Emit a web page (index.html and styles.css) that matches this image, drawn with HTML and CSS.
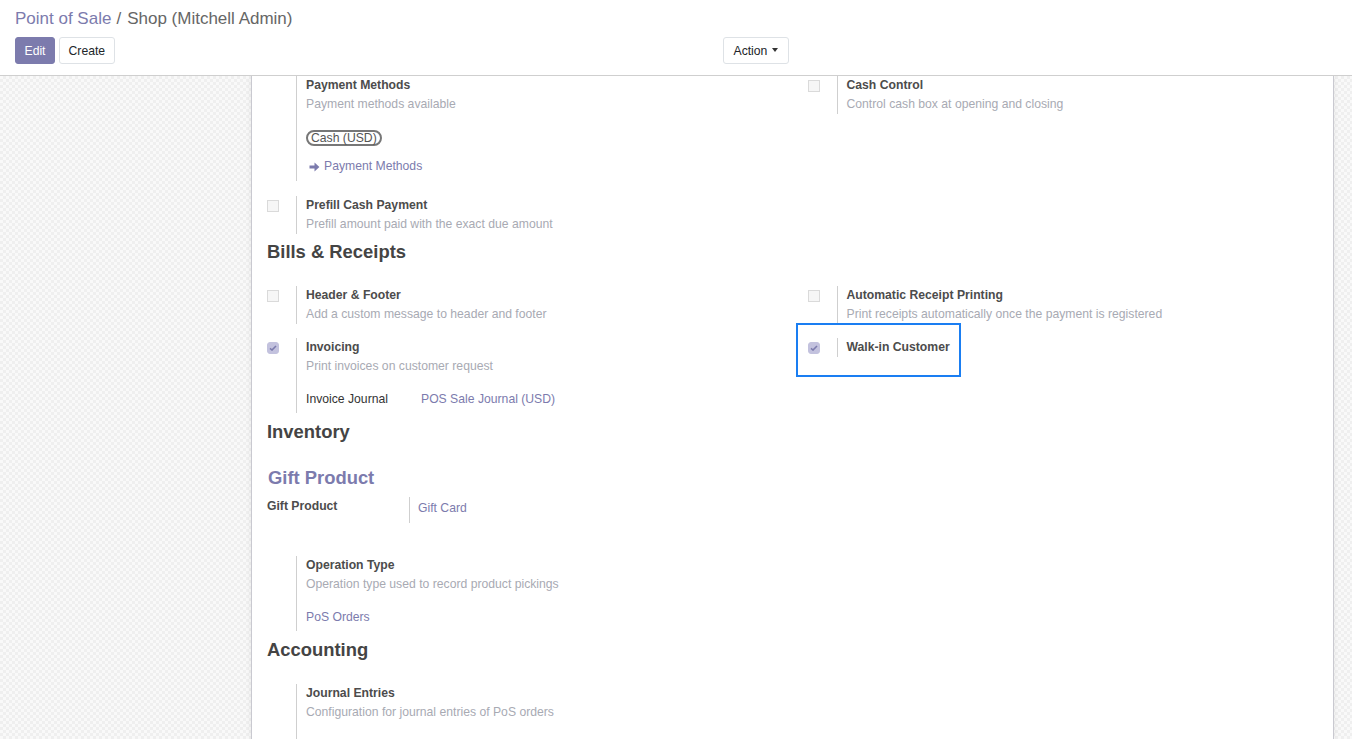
FILE: index.html
```html
<!DOCTYPE html>
<html lang="en">
<head>
<meta charset="utf-8">
<title>Shop (Mitchell Admin)</title>
<link rel="stylesheet" href="styles.css">
</head>
<body>
<header class="cp">
  <div class="crumbs"><span class="crumb-link">Point of Sale</span><span class="crumb-sep">/</span><span class="crumb-cur">Shop (Mitchell Admin)</span></div>
  <div class="cp-bottom">
    <div class="cp-left">
      <button class="btn btn-primary">Edit</button>
      <button class="btn btn-secondary">Create</button>
    </div>
    <div class="cp-right">
      <button class="btn btn-secondary btn-action">Action <span class="caret"></span></button>
    </div>
  </div>
</header>
<main class="content">
  <div class="sheet">
    <div class="settings row-a">
      <div class="box">
        <div class="left-pane"></div>
        <div class="right-pane pane-pm">
          <div class="s-title">Payment Methods</div>
          <div class="s-desc">Payment methods available</div>
          <div class="tags"><span class="badge">Cash (USD)</span></div>
          <div class="s-link link-pm">
            <svg class="arrow" width="11" height="10" viewBox="0 0 11 10"><path d="M0.5 3.4h5V0.6L10.4 5 5.5 9.4V6.6h-5z" fill="#7c7bad"/></svg>Payment Methods
          </div>
        </div>
      </div>
      <div class="box">
        <div class="left-pane"><span class="cb"></span></div>
        <div class="right-pane">
          <div class="s-title">Cash Control</div>
          <div class="s-desc">Control cash box at opening and closing</div>
        </div>
      </div>
    </div>

    <div class="settings row-b">
      <div class="box">
        <div class="left-pane"><span class="cb"></span></div>
        <div class="right-pane">
          <div class="s-title">Prefill Cash Payment</div>
          <div class="s-desc">Prefill amount paid with the exact due amount</div>
        </div>
      </div>
    </div>

    <h2 class="section h-bills">Bills &amp; Receipts</h2>

    <div class="settings row-c">
      <div class="box">
        <div class="left-pane"><span class="cb"></span></div>
        <div class="right-pane">
          <div class="s-title">Header &amp; Footer</div>
          <div class="s-desc">Add a custom message to header and footer</div>
        </div>
      </div>
      <div class="box">
        <div class="left-pane"><span class="cb"></span></div>
        <div class="right-pane">
          <div class="s-title">Automatic Receipt Printing</div>
          <div class="s-desc">Print receipts automatically once the payment is registered</div>
        </div>
      </div>
    </div>

    <div class="settings row-d">
      <div class="box">
        <div class="left-pane"><span class="cb cb-on"><svg width="8" height="6" viewBox="0 0 8 6"><path d="M1 3.4 3 5 7 1" fill="none" stroke="#7c7bad" stroke-width="1.6"/></svg></span></div>
        <div class="right-pane pane-inv">
          <div class="s-title">Invoicing</div>
          <div class="s-desc">Print invoices on customer request</div>
          <div class="field-row"><span class="field-label">Invoice Journal</span><span class="field-value">POS Sale Journal (USD)</span></div>
        </div>
      </div>
      <div class="box box-hl">
        <div class="left-pane"><span class="cb cb-on"><svg width="8" height="6" viewBox="0 0 8 6"><path d="M1 3.4 3 5 7 1" fill="none" stroke="#7c7bad" stroke-width="1.6"/></svg></span></div>
        <div class="right-pane">
          <div class="s-title">Walk-in Customer</div>
        </div>
        <div class="highlight"></div>
      </div>
    </div>

    <h2 class="section h-inv">Inventory</h2>
    <h2 class="section section-purple">Gift Product</h2>

    <div class="group-row">
      <div class="group-label">Gift Product</div>
      <div class="group-value">Gift Card</div>
    </div>

    <div class="settings row-e">
      <div class="box">
        <div class="left-pane"></div>
        <div class="right-pane pane-op">
          <div class="s-title">Operation Type</div>
          <div class="s-desc">Operation type used to record product pickings</div>
          <div class="s-link link-op">PoS Orders</div>
        </div>
      </div>
    </div>

    <h2 class="section h-acc">Accounting</h2>

    <div class="settings row-f">
      <div class="box">
        <div class="left-pane"></div>
        <div class="right-pane pane-je">
          <div class="s-title">Journal Entries</div>
          <div class="s-desc">Configuration for journal entries of PoS orders</div>
        </div>
      </div>
    </div>
  </div>
</main>
</body>
</html>
```
FILE: styles.css
```css
html, body {
  height: 100%;
}
body {
  margin: 0;
  font-family: "Liberation Sans", Arial, sans-serif;
  font-size: 12.2px;
  color: #4c4c4c;
  overflow: hidden;
  display: flex;
  flex-direction: column;
}

/* Control panel */
.cp {
  background: #fff;
  height: 76px;
  box-sizing: border-box;
  border-bottom: 1px solid #cfcfcf;
  padding: 8px 15px 0;
  flex: none;
  position: relative;
  z-index: 1;
}
.crumbs {
  font-size: 17px;
  line-height: 22px;
  white-space: nowrap;
}
.crumb-link { color: #7c7bad; }
.crumb-sep { color: #666; margin: 0 6px 0 5px; }
.crumb-cur { color: #666; }

.cp-bottom {
  margin-top: 7px;
  display: grid;
  grid-template-columns: 1fr 1fr;
}
.cp-left { display: flex; gap: 4px; }
.cp-right { padding-left: 47px; display: flex; }

.btn {
  height: 27px;
  box-sizing: border-box;
  padding: 0 8.5px;
  font-family: inherit;
  font-size: 12.2px;
  border-radius: 3px;
  border: 1px solid transparent;
  cursor: pointer;
  display: inline-flex;
  align-items: center;
}
.btn-primary {
  background: #7c7bad;
  border-color: #7c7bad;
  color: #fff;
}
.btn-secondary {
  background: #fff;
  border-color: #dee2e6;
  color: #212529;
}
.btn-action { gap: 4px; padding: 0 9.5px; }
.caret {
  display: inline-block;
  width: 0;
  height: 0;
  border-left: 3.5px solid transparent;
  border-right: 3.5px solid transparent;
  border-top: 4px solid #333;
  margin-left: 1px;
  margin-top: -1px;
}

/* Content */
.content {
  flex: 1;
  min-height: 0;
  background-color: #f7f7f7;
  background-image: repeating-conic-gradient(#efefef 0 25%, #f9f9f9 0 50%);
  background-size: 6px 6px;
  padding-left: 251px;
  padding-right: 18px;
}
.sheet {
  background: #fff;
  border-left: 1px solid #c9c9d0;
  border-right: 1px solid #c9c9d0;
  box-shadow: 0 0 6px rgba(0, 0, 0, 0.08);
  height: 100%;
  box-sizing: border-box;
  overflow: hidden;
}

.settings {
  display: grid;
  grid-template-columns: 1fr 1fr;
}
.row-a { margin-top: -0.5px; }
.row-b { margin-top: 14.5px; }
.row-c { margin-top: 22.5px; }
.row-d { margin-top: 14px; }
.row-e { margin-top: 33px; }
.row-f { margin-top: 23.5px; }

.box {
  display: flex;
  padding-left: 15px;
  align-items: flex-start;
}
.box-hl { position: relative; }
.left-pane {
  width: 29px;
  flex: none;
}
.right-pane {
  border-left: 1px solid #cfcfcf;
  padding-left: 9px;
  line-height: 19px;
}
.s-title {
  font-weight: bold;
  color: #4c4c4c;
}
.s-desc {
  color: #a8aab3;
}

.pane-pm { padding-bottom: 5.5px; }
.tags {
  margin-top: 16px;
  display: flex;
}
.badge {
  display: inline-block;
  border: 2px solid #777;
  border-radius: 9px;
  padding: 0 3px;
  height: 16px;
  line-height: 13px;
  box-sizing: border-box;
  color: #555;
  font-size: 12.2px;
}
.s-link {
  color: #7c7bad;
  display: flex;
  align-items: center;
}
.link-pm { margin-top: 11px; }
.arrow {
  margin: 1px 4px 0 3px;
}

.cb {
  display: block;
  width: 12px;
  height: 12px;
  box-sizing: border-box;
  border: 1px solid #dadada;
  background: #f6f6f6;
  margin-top: 4px;
}
.cb-on {
  border-color: #c3c2de;
  background: #c3c2de;
  border-radius: 3px;
  display: flex;
  align-items: center;
  justify-content: center;
}

.pane-inv { padding-bottom: 4.5px; }
.field-row {
  margin-top: 14px;
  display: flex;
}
.field-label {
  width: 115px;
  color: #333;
}
.field-value { color: #7c7bad; }

.highlight {
  position: absolute;
  left: 3.5px;
  top: -15px;
  width: 165px;
  height: 54px;
  box-sizing: border-box;
  border: 2.5px solid #1a7ef2;
}

.section {
  margin: 0;
  padding-left: 15px;
  font-size: 18.4px;
  line-height: 22px;
  font-weight: bold;
  color: #444;
}
.h-bills { margin-top: 7.5px; }
.h-inv { margin-top: 8px; }
.section-purple {
  margin-top: 24px;
  color: #7c7bad;
  padding-left: 16px;
}
.h-acc { margin-top: 8px; }

.group-row {
  margin-top: 8px;
  display: flex;
  padding-left: 15px;
  height: 26px;
}
.group-label {
  width: 142px;
  font-weight: bold;
  line-height: 18px;
}
.group-value {
  border-left: 1px solid #cfcfcf;
  padding-left: 8px;
  color: #7c7bad;
  line-height: 18px;
  padding-top: 2px;
}

.pane-op { padding-bottom: 3.5px; }
.link-op { margin-top: 14px; }
.pane-je { padding-bottom: 60px; }
```
